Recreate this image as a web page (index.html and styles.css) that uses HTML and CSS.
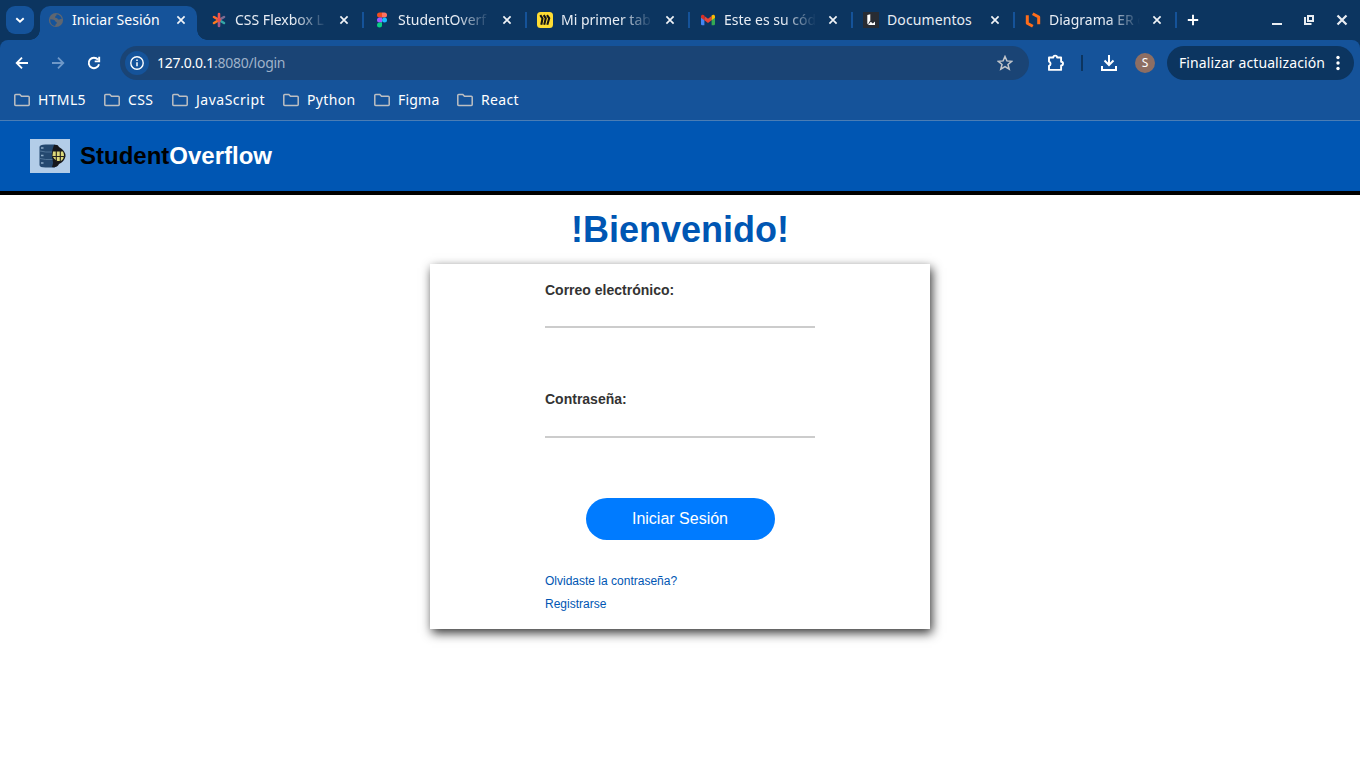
FILE: index.html
```html
<!DOCTYPE html>
<html lang="es">
<head>
<meta charset="utf-8">
<title>Iniciar Sesión</title>
<link rel="stylesheet" href="styles.css">
</head>
<body>
<svg class="defs" width="0" height="0">
  <symbol id="x" viewBox="0 0 16 16"><path d="M4.400 4.400l7.200 7.200M11.600 4.400l-7.200 7.200" fill="none" stroke="currentColor" stroke-width="1.700"/></symbol>
  <symbol id="folder" viewBox="0 0 16 14"><path d="M.8 11.700V2.300q0-.9.9-.9H5.800l1.700 1.900h6.800q.9 0 .9.900v7.500q0 .7-.9.700H1.700q-.9 0-.9-.8z" fill="none" stroke="#bdbfc2" stroke-width="1.500"/></symbol>
</svg>

<div class="tabstrip">
  <div class="tab-search"><svg width="12" height="12" viewBox="0 0 12 12"><path d="M2.300 4.200L6 7.700l3.700-3.500" fill="none" stroke="#fff" stroke-width="1.900"/></svg></div>
  <div class="tab tab-active">
    <svg class="fav" viewBox="0 0 16 16"><circle cx="8" cy="8" r="7.100" fill="#5f6670"/><path d="M2.300 7.300c2.600.3 4.400.4 5 1.900.3 1 1.700.5 1.500 1.700-.2 1.200-1.500 1-1.600 3C3.900 13.700 1.900 11 2.300 7.300zM8.600 2.300c2.400.2 4.700 2 5.100 4.600-1.700-.1-2 .9-3.200.7-1.100-.2-.6-1.500-2.100-1.500-1.200 0-1.500-.8-1.100-1.600.3-.8 1.400-.5 1.300-2.200z" fill="#15539a"/></svg>
    <span class="title">Iniciar Sesión</span>
    <svg class="close"><use href="#x"/></svg>
  </div>
  <div class="tab">
    <svg class="fav" viewBox="0 0 16 16" fill="none" stroke-width="2.600" stroke-linecap="round"><path d="M8 8l5-3" stroke="#7c6b91"/><path d="M8 8l5 3" stroke="#35a6a6"/><path d="M8 8v6" stroke="#a85a88"/><path d="M8 8l-5 3" stroke="#ff7a1c"/><path d="M8 8L3 5" stroke="#ff6a2c"/><path d="M8 8V2" stroke="#f4524f"/><circle cx="8" cy="8" r=".6" stroke="#e5484f"/></svg>
    <span class="title fade">CSS Flexbox L</span>
    <svg class="close"><use href="#x"/></svg><i class="sep"></i>
  </div>
  <div class="tab">
    <svg class="fav" viewBox="0 0 16 16"><path d="M8 .5H5.500a2.500 2.500 0 000 5H8z" fill="#f24e1e"/><path d="M8 .5h2.500a2.500 2.500 0 010 5H8z" fill="#ff7262"/><path d="M8 5.500H5.500a2.500 2.500 0 000 5H8z" fill="#a259ff"/><circle cx="10.500" cy="8" r="2.500" fill="#1abcfe"/><path d="M8 10.500H5.500A2.500 2.500 0 108 13z" fill="#0acf83"/></svg>
    <span class="title fade">StudentOverf</span>
    <svg class="close"><use href="#x"/></svg><i class="sep"></i>
  </div>
  <div class="tab">
    <svg class="fav" viewBox="0 0 16 16"><rect width="16" height="16" rx="3.500" fill="#ffdd33"/><path d="M3.300 3.200L5.500 6.500 4.300 12.800M6.700 3.200L8.800 6.300 7.200 12.800M10 3.200l2.200 3.100-1.900 6.500" fill="none" stroke="#151515" stroke-width="2.100"/></svg>
    <span class="title fade">Mi primer tab</span>
    <svg class="close"><use href="#x"/></svg><i class="sep"></i>
  </div>
  <div class="tab">
    <svg class="fav" viewBox="0 0 16 16"><path d="M1 4v8q0 1.300 1.200 1.300h2.200V6.500z" fill="#4285f4"/><path d="M15 4v8q0 1.300-1.200 1.300h-2.200V6.500z" fill="#34a853"/><path d="M4.400 4L8 6.800 11.600 4v4.300L8 11 4.400 8.300z" fill="#ea4335"/><path d="M1 4.500C1 2.600 3 2.300 4.400 3.500v4.800L1 5.800z" fill="#d93025"/><path d="M15 4.500c0-1.900-2-2.200-3.400-1v4.800L15 5.800z" fill="#fbbc04"/></svg>
    <span class="title fade">Este es su cód</span>
    <svg class="close"><use href="#x"/></svg><i class="sep"></i>
  </div>
  <div class="tab tab-narrow">
    <svg class="fav" viewBox="0 0 16 16"><rect width="16" height="16" fill="#282c33"/><path d="M4.300 3l3-.8v6L5 12.500l-.7-1z" fill="#fff"/><path d="M5 13l2.800-3.200 2 1.600L12 9.500V13z" fill="#fff"/></svg>
    <span class="title docs">Documentos</span>
    <svg class="close"><use href="#x"/></svg><i class="sep"></i>
  </div>
  <div class="tab tab-narrow">
    <svg class="fav" viewBox="0 0 16 16" fill="none" stroke="#ff6d1a" stroke-width="3" stroke-linejoin="round"><path d="M2.300 3.300v7.900l5.500 3.100M7.700 1.700L13.700 5v7.200"/></svg>
    <span class="title fade">Diagrama ER c</span>
    <svg class="close"><use href="#x"/></svg><i class="sep"></i>
  </div>
  <svg class="newtab" viewBox="0 0 16 16"><path d="M8 2.800v10.400M2.800 8h10.400" stroke="#fff" stroke-width="1.900"/></svg>
  <div class="window-buttons">
    <svg viewBox="0 0 16 16"><path d="M3 12h10" stroke="#e9edf2" stroke-width="2"/></svg>
    <svg viewBox="0 0 16 16" fill="none" stroke="#e9edf2" stroke-width="2"><path d="M7 4h5v5H7zM4 5v7h6.500"/></svg>
    <svg viewBox="0 0 16 16"><path d="M3.500 3.500l9 9M12.500 3.500l-9 9" stroke="#e9edf2" stroke-width="2.200"/></svg>
  </div>
</div>

<div class="chrome">
  <div class="toolbar">
    <svg class="nav" viewBox="0 0 16 16" fill="none" stroke="#fff" stroke-width="1.800"><path d="M14 8H3M8 2.700L2.700 8 8 13.300"/></svg>
    <svg class="nav" viewBox="0 0 16 16" fill="none" stroke="#6f98c8" stroke-width="1.800"><path d="M2 8h11M8 2.700L13.300 8 8 13.300"/></svg>
    <svg class="nav" viewBox="0 0 16 16" fill="none" stroke="#fff" stroke-width="1.900"><path d="M13 9.200A5.200 5.200 0 1 1 12 4.700M13.200 1.800v4.600H8.700"/></svg>
    <div class="omnibox">
      <div class="info"><svg width="16" height="16" viewBox="0 0 16 16"><circle cx="8" cy="8" r="6.200" fill="none" stroke="#fff" stroke-width="1.400"/><path d="M8 7.200v4M8 4.600v1.500" stroke="#fff" stroke-width="1.500"/></svg></div>
      <span class="url">127.0.0.1<span class="path">:8080/login</span></span>
      <svg class="star" viewBox="0 0 16 16"><path d="M8 1.500l1.900 4.400 4.800.4L11 9.500l1.200 4.700L8 11.700l-4.200 2.500L5 9.500 1.300 6.300l4.800-.4z" fill="none" stroke="#c3c7cc" stroke-width="1.500"/></svg>
    </div>
    <svg class="ext" viewBox="0 0 20 20"><path d="M3 4.500h4.300a1.900 1.900 0 013.800 0h4v4.200a1.900 1.900 0 010 3.800v4.400H3v-4.100a2.200 2.200 0 000-4.200z" fill="none" stroke="#fff" stroke-width="1.900" stroke-linejoin="round"/></svg>
    <i class="divider"></i>
    <svg class="download" viewBox="0 0 20 20" fill="none" stroke="#fff" stroke-width="2"><path d="M10 2v9.500M5.500 7.500L10 12l4.500-4.500M3 13v4h14v-4"/></svg>
    <div class="avatar">S</div>
    <div class="update"><span>Finalizar actualización</span><svg width="4" height="16" viewBox="0 0 4 16" fill="#fff"><circle cx="2" cy="2.500" r="1.700"/><circle cx="2" cy="8" r="1.700"/><circle cx="2" cy="13.500" r="1.700"/></svg></div>
  </div>
  <div class="bookmarks">
    <div class="bm b1"><svg><use href="#folder"/></svg><span>HTML5</span></div>
    <div class="bm b2"><svg><use href="#folder"/></svg><span>CSS</span></div>
    <div class="bm b3"><svg><use href="#folder"/></svg><span>JavaScript</span></div>
    <div class="bm b4"><svg><use href="#folder"/></svg><span>Python</span></div>
    <div class="bm b5"><svg><use href="#folder"/></svg><span>Figma</span></div>
    <div class="bm b6"><svg><use href="#folder"/></svg><span>React</span></div>
  </div>
</div>

<header class="site-header">
  <svg class="logo" width="40" height="34" viewBox="0 0 40 34"><rect width="40" height="34" fill="#b3cde8"/><path d="M9.500 8q0-2.500 6-2.500H25v23h-9.500q-6 0-6-2.500z" fill="#24486f"/><path d="M10 12q5 1.500 13 1M10 19.500q5 1.500 13 1" fill="none" stroke="#54779b" stroke-width=".9"/><path d="M11 9h2.500M11 16.500h2.500M11 24h2.500" stroke="#8dabc8" stroke-width="1.300"/><path d="M24 6q4-1 5 2 7 4 6.500 9.500Q34 23 29 25q-2 4-7 3 2-4 .5-8-2-5 1.500-14z" fill="#15171c"/><path d="M23 12.500h10q1 2 1 4.500t-3 5h-3.500q-4-2-5-5.500z" fill="#dcd97a"/><path d="M26.300 12v11M30.300 12v11M22.500 17.500H35" stroke="#25231f" stroke-width="1.100"/></svg>
  <div class="brand">Student<span>Overflow</span></div>
</header>

<main>
  <h1>!Bienvenido!</h1>
  <form class="card">
    <label for="email">Correo electrónico:</label>
    <input id="email" type="email">
    <label for="pass">Contraseña:</label>
    <input id="pass" type="password">
    <button type="button">Iniciar Sesión</button>
    <a>Olvidaste la contraseña?</a>
    <a>Registrarse</a>
  </form>
</main>
</body>
</html>
```
FILE: styles.css
```css
* { box-sizing: border-box; }
html { background: linear-gradient(#0c3560 60px, #fff 60px); }
body { margin: 0; height: 768px; overflow: hidden; font-family: "Liberation Sans", Arial, sans-serif; }
svg { display: block; flex: none; }
.defs { position: absolute; }

/* Tab strip */
.tabstrip { display: flex; height: 40px; background: #0c3560; color: #fff; font: 14px/20px "Noto Sans", sans-serif; }
.tab-search { display: flex; align-items: center; justify-content: center; width: 28px; height: 28px; margin: 6px 6px 0; border-radius: 9px; background: #15539a; }
.tab { display: flex; align-items: center; flex: none; width: 163px; height: 40px; padding-left: 10px; }
.tab-narrow { width: 162px; }
.fav { width: 16px; height: 16px; margin-right: 8px; }
.title { width: 92px; overflow: hidden; white-space: nowrap; color: #e8edf4; }
.tab-narrow .title { width: 91px; }
.docs { letter-spacing: .1px; }
.fade { -webkit-mask-image: linear-gradient(90deg, #000 64%, transparent 100%); mask-image: linear-gradient(90deg, #000 64%, transparent 100%); }
.close { width: 16px; height: 16px; margin-left: 9px; color: #f0f3f7; }
.sep { width: 2px; height: 16px; margin-left: auto; background: #15539a; }
.tab-active { position: relative; width: 157px; height: 34px; margin: 6px 4px 0 0; padding: 0 0 6px 8px; border-radius: 10px 10px 0 0; background: #15539a; }
.tab-active .title { color: #fff; }
.tab-active::before, .tab-active::after { content: ""; position: absolute; bottom: 0; width: 10px; height: 10px; }
.tab-active::before { left: -10px; background: radial-gradient(circle at 0 0, transparent 9.500px, #15539a 10px); }
.tab-active::after { right: -10px; background: radial-gradient(circle at 100% 0, transparent 9.500px, #15539a 10px); }
.newtab { width: 16px; height: 16px; margin: 12px 0 0 8px; }
.window-buttons { display: flex; gap: 16px 17px; margin: 12px 10px 0 auto; }
.window-buttons svg { width: 16px; height: 16px; }
.window-buttons svg:first-child { margin-right: -1px; }

/* Toolbar */
.chrome { height: 81px; border-bottom: 1px solid #4a7db5; border-radius: 8px 8px 0 0; background: #15539a; color: #fff; font: 14px/20px "Noto Sans", sans-serif; }
.toolbar { display: flex; align-items: center; height: 46px; padding: 0 6px 0 14px; }
.nav { width: 16px; height: 16px; margin-right: 20px; }
.nav:nth-child(3) { margin-right: 18px; }
.omnibox { display: flex; align-items: center; width: 909px; height: 34px; border-radius: 17px; background: #1a4475; padding: 0 16px 0 5px; }
.info { display: flex; align-items: center; justify-content: center; width: 24px; height: 24px; border-radius: 12px; background: #15539a; }
.url { margin-left: 8px; letter-spacing: -.25px; }
.path { color: #9fb2c9; }
.star { width: 16px; height: 16px; margin-left: auto; }
.ext { width: 20px; height: 20px; margin-left: 17px; }
.divider { width: 2px; height: 16px; margin-left: 15px; background: #0c3560; }
.download { width: 20px; height: 20px; margin-left: 16px; }
.avatar { width: 20px; height: 20px; margin-left: 16px; border-radius: 10px; background: #8d6e63; font-size: 12px; text-align: center; }
.update { display: flex; align-items: center; justify-content: space-between; width: 187px; height: 34px; margin-left: auto; padding: 0 14px 0 12px; border-radius: 17px; background: #0c3560; letter-spacing: .1px; white-space: nowrap; }
.bookmarks { display: flex; height: 34px; padding: 0 0 6px 14px; align-items: center; }
.bm { display: flex; align-items: center; gap: 8px; flex: none; letter-spacing: .35px; }
.bm svg { width: 16px; height: 14px; }
.b1 { width: 90px; }
.b2 { width: 68px; }
.b3 { width: 111px; letter-spacing: .5px; }
.b4 { width: 91px; }
.b5 { width: 83px; letter-spacing: .2px; }

/* Page */
.site-header { display: flex; align-items: center; height: 74px; padding: 0 30px; border-bottom: 4px solid #000; background: #0056b3; }
.brand { margin-left: 10px; color: #000; font-size: 24px; font-weight: 700; line-height: 28px; }
.brand span { color: #fff; }
main { height: 573px; padding-top: 14px; background: #fff; }
h1 { margin: 0 0 14px; color: #0056b3; font-size: 36px; line-height: 41px; text-align: center; }
.card { display: flex; flex-direction: column; width: 500px; height: 365px; margin: 0 auto; padding: 18px 115px 0; background: #fff; box-shadow: 2px 4px 10px rgba(0, 0, 0, .8); }
label { color: #333; font-size: 14px; font-weight: 700; line-height: 16px; }
input { height: 30px; margin: 0 0 63px; padding: 0; border: 0; border-bottom: 2px solid #ccc; outline: 0; background: none; }
#pass { height: 31px; margin-bottom: 60px; }
button { align-self: center; width: 189px; height: 42px; margin: 0 0 34px 1px; padding: 0 1px 0 0; border: 0; border-radius: 21px; background: #007bff; color: #fff; font: 16px/18px "Liberation Sans", Arial, sans-serif; }
.card a { margin-bottom: 9px; color: #0056b3; font-size: 12px; line-height: 14px; }
```
